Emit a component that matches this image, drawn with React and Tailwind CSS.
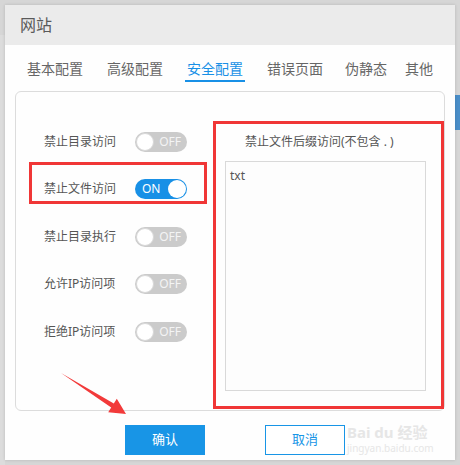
import React from 'react';

const tabs = [
  { name: '基本配置', ml: 'ml-0' },
  { name: '高级配置', ml: 'ml-[20px]' },
  { name: '安全配置', ml: 'ml-[20px]', active: true },
  { name: '错误页面', ml: 'ml-[20px]' },
  { name: '伪静态', ml: 'ml-[18px]' },
  { name: '其他', ml: 'ml-[14px]' },
];

const rows = [
  { label: '禁止目录访问', on: false },
  { label: '禁止文件访问', on: true },
  { label: '禁止目录执行', on: false },
  { label: '允许IP访问项', on: false },
  { label: '拒绝IP访问项', on: false },
];

// simple pill switch like the panel uses
const Toggle = ({ on }) =>
  on ? (
    <div className="flex h-[20px] w-[52px] items-center justify-between rounded-full bg-[#1890e6] pl-[7px] pr-[1px]">
      <span className="text-[12px] leading-none text-white">ON</span>
      <span className="h-[18px] w-[18px] rounded-full bg-white" />
    </div>
  ) : (
    <div className="flex h-[20px] w-[52px] items-center justify-between rounded-full bg-[#cbcbcb] pl-[1px] pr-[6px]">
      <span className="h-[18px] w-[18px] rounded-full border border-[#d8d8d8] bg-white" />
      <span className="text-[12px] leading-none text-[#f4f4f4]">OFF</span>
    </div>
  );

const App = () => {
  return (
    <div
      className="relative h-[465px] w-[460px] overflow-hidden bg-[#d6d6d6] pl-[5px] pt-[5px]"
      style={{ fontFamily: '"Noto Sans", "Noto Sans CJK SC", sans-serif' }}
    >
      {/* page behind the dialog */}
      <div className="absolute right-0 top-[95px] h-[35px] w-[5px] bg-[#4a8ec8]" />
      <div className="absolute left-0 top-[35px] h-[430px] w-[5px] bg-[#dcdcdc]" />

      <div className="relative flex h-[455px] w-[450px] flex-col bg-[#fefefe] shadow-[0_0_3px_rgba(0,0,0,0.15)]">
        <div className="flex h-[40px] items-center bg-[#ebebeb] pl-[15px]">
          <span className="text-[16px] text-[#5a5a5a]">网站</span>
        </div>

        <div className="flex pl-[20px] pt-[14px]">
          {tabs.map((t) => (
            <div
              key={t.name}
              className={`${t.ml} border-b-2 px-[2px] pb-[1px] text-[14px] leading-[20px] ${
                t.active ? 'border-[#1890e6] text-[#1890e6]' : 'border-transparent text-[#666]'
              }`}
            >
              {t.name}
            </div>
          ))}
        </div>

        <div className="mx-[10px] mt-[9px] flex h-[320px] rounded-md border border-[#dcdcdc] bg-[#fefefe]">
          <div className="flex w-[209px] flex-col pl-[28px] pt-[26px]">
            {rows.map((r) => (
              <div key={r.label} className="flex h-[47.5px] items-center">
                <span className="w-[91px] text-[12px] text-[#555]">{r.label}</span>
                <Toggle on={r.on} />
              </div>
            ))}
          </div>
          <div className="flex flex-col pt-[40px]">
            <div className="h-[20px] pl-[20px] text-[12px] leading-[20px] text-[#555]">
              禁止文件后缀访问(不包含 . )
            </div>
            <div className="mt-[9px] h-[230px] w-[201px] border border-[#d9d9d9] bg-[#fdfdfd] px-[4px] pt-[5px] text-[12px] text-[#555]">
              txt
            </div>
          </div>
        </div>

        <div className="mt-[14px] flex gap-[60px] pl-[120px]">
          <button className="h-[30px] w-[80px] bg-[#1895e6] text-[13px] text-white">确认</button>
          <button className="h-[30px] w-[80px] border border-[#1895e6] bg-white text-[13px] text-[#1895e6]">
            取消
          </button>
        </div>

        {/* watermark */}
        <div className="absolute left-[342px] top-[419px] flex flex-col items-start gap-[3px] whitespace-nowrap text-[#e6e6e6]">
          <span className="text-[15px] font-bold leading-[16px]">Bai du 经验</span>
          <span className="text-[10px] leading-[11px]">jingyan.baidu.com</span>
        </div>
      </div>

      {/* red annotations */}
      <div className="absolute left-[29px] top-[162px] h-[42px] w-[178px] border-[3px] border-[#f03636]" />
      <div className="absolute left-[213px] top-[121px] h-[288px] w-[231px] border-[3px] border-[#f03636]" />
      <svg className="absolute left-0 top-0" width="460" height="465">
        <polygon
          points="61,373 113.8,403.4 116.8,398.7 126,414 108.2,412.3 111.2,407.6"
          fill="#f23a3a"
        />
      </svg>
    </div>
  );
};

export default App;
